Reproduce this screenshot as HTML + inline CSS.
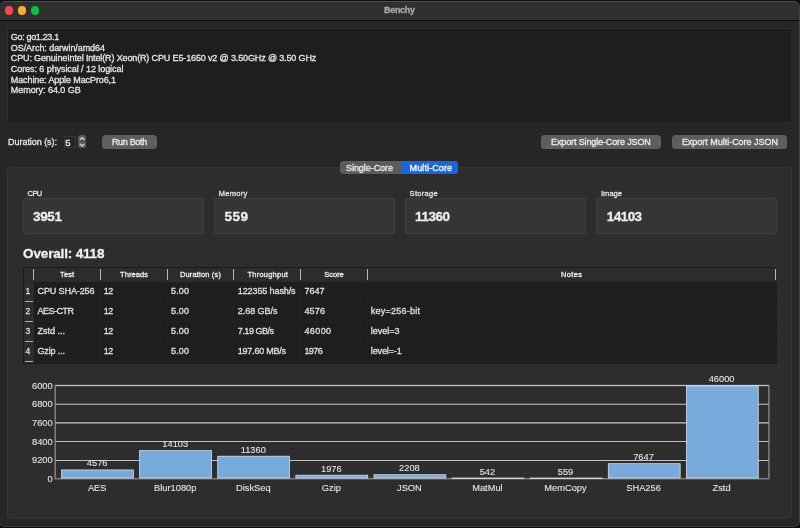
<!DOCTYPE html>
<html>
<head>
<meta charset="utf-8">
<title>Benchy</title>
<style>
*{box-sizing:border-box;margin:0;padding:0}
html,body{width:800px;height:528px;overflow:hidden;background:#0d0e10}
body{font-family:"Liberation Sans", sans-serif;position:relative}
.b{position:absolute}
.t{position:absolute;white-space:pre;-webkit-text-stroke:0.3px currentColor}
.n{-webkit-text-stroke:0.1px currentColor}
#txt{position:absolute;left:0;top:0;width:800px;height:528px;will-change:transform}
#win{position:absolute;left:-1px;top:1px;width:801px;height:525.7px;background:#262626;border-radius:6px;overflow:hidden;border:1px solid #3d3d3d;border-top-color:#4d4d4d;border-right-color:#424242}
#tbar{position:absolute;left:0;top:0;width:100%;height:19px;background:#2f2f2e;border-bottom:1px solid #0c0c0c}
</style>
</head>
<body>
<div id="win"><div id="tbar"></div></div>
<div class="b" style="left:4.6px;top:6.45px;width:8.3px;height:8.3px;background:#fc444b;border-radius:50%"></div>
<div class="b" style="left:17.85px;top:6.45px;width:8.3px;height:8.3px;background:#fcab30;border-radius:50%"></div>
<div class="b" style="left:31.1px;top:6.45px;width:8.3px;height:8.3px;background:#07c045;border-radius:50%"></div>
<div class="b" style="left:7px;top:28px;width:785.3px;height:94.5px;background:#1e1e1e;border:1px solid #282828;border-top-color:#303030;border-left-color:#2f2f2f"></div>
<div class="b" style="left:64px;top:136px;width:11.9px;height:11.8px;background:#262626;border:1px solid #373737"></div>
<svg class="b" style="left:77.7px;top:134.75px" width="8.4" height="13.3" viewBox="0 0 8.4 13.3">
  <rect x="0" y="0" width="8.4" height="13.3" rx="3.2" fill="#5b5b5b"/>
  <rect x="0" y="5.6" width="8.4" height="2" fill="#525252"/>
  <path d="M2.2 4.5 L4.15 2.55 L6.1 4.5" fill="none" stroke="#e4e4e4" stroke-width="1.1" stroke-linecap="round" stroke-linejoin="round"/>
  <path d="M2.2 9.2 L4.15 11.15 L6.1 9.2" fill="none" stroke="#e4e4e4" stroke-width="1.1" stroke-linecap="round" stroke-linejoin="round"/>
</svg>
<div class="b" style="left:102px;top:135.3px;width:55.2px;height:13.3px;background:#5e5e5e;border-radius:3.5px"></div>
<div class="b" style="left:541.1px;top:135.3px;width:119.9px;height:13.3px;background:#5e5e5e;border-radius:3.5px"></div>
<div class="b" style="left:671.7px;top:135.3px;width:115.5px;height:13.3px;background:#5e5e5e;border-radius:3.5px"></div>
<div class="b" style="left:7px;top:167px;width:785px;height:352px;background:#2d2d2d;border:1px solid #353535;border-radius:3px"></div>
<div class="b" style="left:339.6px;top:161px;width:62.4px;height:13px;background:#5b5b5b;border-radius:3.5px 0 0 3.5px"></div>
<div class="b" style="left:401.8px;top:161px;width:56.4px;height:13px;background:#1a66e0;border-radius:0 3.5px 3.5px 0"></div>
<div class="b" style="left:22.6px;top:198.4px;width:181.1px;height:35.7px;background:#353535;border:1px solid #404040;border-radius:2px"></div>
<div class="b" style="left:213.6px;top:198.4px;width:181.1px;height:35.7px;background:#353535;border:1px solid #404040;border-radius:2px"></div>
<div class="b" style="left:404.6px;top:198.4px;width:181.1px;height:35.7px;background:#353535;border:1px solid #404040;border-radius:2px"></div>
<div class="b" style="left:595.6px;top:198.4px;width:181.1px;height:35.7px;background:#353535;border:1px solid #404040;border-radius:2px"></div>
<div class="b" style="left:22.5px;top:267px;width:754.2px;height:96.6px;background:#1e1e1e;border-top:1px solid #1a1a1a;border-left:1px solid #1a1a1a"></div>
<div class="b" style="left:23.5px;top:268px;width:753.2px;height:13.8px;background:#2c2c2c;"></div>
<div class="b" style="left:23.5px;top:268px;width:10.2px;height:94.6px;background:#2c2c2c;"></div>
<div class="b" style="left:33.0px;top:269px;width:0.9px;height:11.4px;background:#b4b4b4;"></div>
<div class="b" style="left:100.1px;top:269px;width:0.9px;height:11.4px;background:#b4b4b4;"></div>
<div class="b" style="left:100.1px;top:281.8px;width:0.9px;height:80.8px;background:#222222;"></div>
<div class="b" style="left:166.6px;top:269px;width:0.9px;height:11.4px;background:#b4b4b4;"></div>
<div class="b" style="left:166.6px;top:281.8px;width:0.9px;height:80.8px;background:#222222;"></div>
<div class="b" style="left:233.3px;top:269px;width:0.9px;height:11.4px;background:#b4b4b4;"></div>
<div class="b" style="left:233.3px;top:281.8px;width:0.9px;height:80.8px;background:#222222;"></div>
<div class="b" style="left:300.1px;top:269px;width:0.9px;height:11.4px;background:#b4b4b4;"></div>
<div class="b" style="left:300.1px;top:281.8px;width:0.9px;height:80.8px;background:#222222;"></div>
<div class="b" style="left:367.2px;top:269px;width:0.9px;height:11.4px;background:#b4b4b4;"></div>
<div class="b" style="left:367.2px;top:281.8px;width:0.9px;height:80.8px;background:#222222;"></div>
<div class="b" style="left:774.8px;top:269px;width:0.9px;height:11.4px;background:#b4b4b4;"></div>
<div class="b" style="left:33.8px;top:301.2px;width:742.9px;height:0.8px;background:#232323;"></div>
<div class="b" style="left:24.6px;top:301.2px;width:8.6px;height:0.9px;background:#b0b0b0;"></div>
<div class="b" style="left:33.8px;top:321.2px;width:742.9px;height:0.8px;background:#232323;"></div>
<div class="b" style="left:24.6px;top:321.2px;width:8.6px;height:0.9px;background:#b0b0b0;"></div>
<div class="b" style="left:33.8px;top:341.2px;width:742.9px;height:0.8px;background:#232323;"></div>
<div class="b" style="left:24.6px;top:341.2px;width:8.6px;height:0.9px;background:#b0b0b0;"></div>
<div class="b" style="left:33.8px;top:361.2px;width:742.9px;height:0.8px;background:#232323;"></div>
<div class="b" style="left:24.6px;top:361.2px;width:8.6px;height:0.9px;background:#b0b0b0;"></div>
<svg class="b" style="left:0;top:370px" width="800" height="130" viewBox="0 370 800 130">
<rect x="55.2" y="385.50" width="713.70" height="93.20" fill="none" stroke="#7c7c7c" stroke-width="1.6"/>
<g stroke="#c8c8c8">
<line x1="55.6" y1="385.50" x2="768.6" y2="385.50" stroke-width="0.9"/>
<line x1="55.6" y1="404.30" x2="768.6" y2="404.30" stroke-width="1.1"/>
<line x1="55.6" y1="422.80" x2="768.6" y2="422.80" stroke-width="1.15"/>
<line x1="55.6" y1="441.50" x2="768.6" y2="441.50" stroke-width="0.95"/>
<line x1="55.6" y1="460.50" x2="768.6" y2="460.50" stroke-width="0.95"/>
</g>
<g fill="#78aadc" stroke="#e6ecf3" stroke-width="0.7">
<rect x="61.55" y="469.93" width="71.90" height="8.12"/>
<rect x="139.65" y="450.63" width="71.90" height="27.42"/>
<rect x="217.75" y="456.18" width="71.90" height="21.87"/>
<rect x="295.85" y="475.20" width="71.90" height="2.85"/>
<rect x="373.95" y="474.73" width="71.90" height="3.32"/>
<rect x="451.75" y="477.65" width="72.50" height="1.15" fill="#e6e6e6" stroke="none"/>
<rect x="529.85" y="477.65" width="72.50" height="1.15" fill="#e6e6e6" stroke="none"/>
<rect x="608.25" y="463.71" width="71.90" height="14.34"/>
<rect x="686.35" y="386.00" width="71.90" height="92.05"/>
</g></svg>
<div id="txt">
<div class="t" style="left:384.00px;top:5.00px;font-size:9px;line-height:10px;color:#a8a8a8;font-weight:bold;letter-spacing:-0.303px">Benchy</div>
<div class="t" style="left:10.80px;top:32.00px;font-size:9px;line-height:10px;color:#e6e6e6;letter-spacing:-0.332px">Go: go1.23.1</div>
<div class="t" style="left:10.80px;top:43.00px;font-size:9px;line-height:10px;color:#e6e6e6;letter-spacing:-0.067px">OS/Arch: darwin/amd64</div>
<div class="t" style="left:10.80px;top:53.00px;font-size:9px;line-height:10px;color:#e6e6e6;letter-spacing:-0.136px">CPU: GenuineIntel Intel(R) Xeon(R) CPU E5-1650 v2 @ 3.50GHz @ 3.50 GHz</div>
<div class="t" style="left:10.80px;top:64.00px;font-size:9px;line-height:10px;color:#e6e6e6;letter-spacing:-0.068px">Cores: 6 physical / 12 logical</div>
<div class="t" style="left:10.80px;top:75.00px;font-size:9px;line-height:10px;color:#e6e6e6;letter-spacing:-0.103px">Machine: Apple MacPro6,1</div>
<div class="t" style="left:10.80px;top:85.00px;font-size:9px;line-height:10px;color:#e6e6e6;letter-spacing:-0.045px">Memory: 64.0 GB</div>
<div class="t" style="left:8.10px;top:137.00px;font-size:9px;line-height:10px;color:#e6e6e6;letter-spacing:-0.051px">Duration (s):</div>
<div class="t" style="left:65.20px;top:137.00px;font-size:9.5px;line-height:11px;color:#e6e6e6">5</div>
<div class="t" style="left:111.95px;top:137.00px;font-size:9px;line-height:10px;color:#ececec;letter-spacing:-0.319px">Run Both</div>
<div class="t" style="left:551.00px;top:137.00px;font-size:9px;line-height:10px;color:#ececec;letter-spacing:-0.125px">Export Single-Core JSON</div>
<div class="t" style="left:681.90px;top:137.00px;font-size:9px;line-height:10px;color:#ececec;letter-spacing:-0.021px">Export Multi-Core JSON</div>
<div class="t" style="left:346.00px;top:163.00px;font-size:9px;line-height:10px;color:#ececec;letter-spacing:-0.053px">Single-Core</div>
<div class="t" style="left:409.60px;top:163.00px;font-size:9px;line-height:10px;color:#ffffff;letter-spacing:0.098px">Multi-Core</div>
<div class="t" style="left:27.60px;top:189.00px;font-size:7.5px;line-height:9px;color:#e0e0e0;letter-spacing:-0.572px">CPU</div>
<div class="t" style="left:218.80px;top:189.00px;font-size:7.5px;line-height:9px;color:#e0e0e0;letter-spacing:0.281px">Memory</div>
<div class="t" style="left:409.60px;top:189.00px;font-size:7.5px;line-height:9px;color:#e0e0e0;letter-spacing:0.286px">Storage</div>
<div class="t" style="left:601.00px;top:189.00px;font-size:7.5px;line-height:9px;color:#e0e0e0;letter-spacing:0.035px">Image</div>
<div class="t" style="left:33.10px;top:209.00px;font-size:13.5px;line-height:15px;color:#efefef;font-weight:bold;letter-spacing:-0.382px">3951</div>
<div class="t" style="left:224.50px;top:209.00px;font-size:13.5px;line-height:15px;color:#efefef;font-weight:bold;letter-spacing:0.434px">559</div>
<div class="t" style="left:415.10px;top:209.00px;font-size:13.5px;line-height:15px;color:#efefef;font-weight:bold;letter-spacing:-0.449px">11360</div>
<div class="t" style="left:606.80px;top:209.00px;font-size:13.5px;line-height:15px;color:#efefef;font-weight:bold;letter-spacing:-0.562px">14103</div>
<div class="t" style="left:23.10px;top:246.00px;font-size:13.5px;line-height:15px;color:#f0f0f0;font-weight:bold;letter-spacing:-0.161px">Overall: 4118</div>
<div class="t" style="left:59.97px;top:270.00px;font-size:7.5px;line-height:9px;color:#ececec;letter-spacing:0.161px">Test</div>
<div class="t" style="left:120.00px;top:270.00px;font-size:7.5px;line-height:9px;color:#ececec;letter-spacing:0.081px">Threads</div>
<div class="t" style="left:179.90px;top:270.00px;font-size:7.5px;line-height:9px;color:#ececec;letter-spacing:0.165px">Duration (s)</div>
<div class="t" style="left:247.50px;top:270.00px;font-size:7.5px;line-height:9px;color:#ececec;letter-spacing:0.225px">Throughput</div>
<div class="t" style="left:324.25px;top:270.00px;font-size:7.5px;line-height:9px;color:#ececec;letter-spacing:-0.023px">Score</div>
<div class="t" style="left:561.00px;top:270.00px;font-size:7.5px;line-height:9px;color:#ececec;letter-spacing:0.352px">Notes</div>
<div class="t" style="left:25.43px;top:286.00px;font-size:8.5px;line-height:10px;color:#dcdcdc">1</div>
<div class="t" style="left:37.50px;top:286.00px;font-size:9px;line-height:10px;color:#e0e0e0;letter-spacing:-0.103px">CPU SHA-256</div>
<div class="t" style="left:103.75px;top:286.00px;font-size:9px;line-height:10px;color:#e0e0e0;letter-spacing:-0.516px">12</div>
<div class="t" style="left:171.10px;top:286.00px;font-size:9px;line-height:10px;color:#e0e0e0;letter-spacing:0.123px">5.00</div>
<div class="t" style="left:237.80px;top:286.00px;font-size:9px;line-height:10px;color:#e0e0e0;letter-spacing:-0.105px">122355 hash/s</div>
<div class="t" style="left:304.40px;top:286.00px;font-size:9px;line-height:10px;color:#e0e0e0;letter-spacing:0.023px">7647</div>
<div class="t" style="left:25.43px;top:306.00px;font-size:8.5px;line-height:10px;color:#dcdcdc">2</div>
<div class="t" style="left:37.50px;top:306.00px;font-size:9px;line-height:10px;color:#e0e0e0;letter-spacing:-0.503px">AES-CTR</div>
<div class="t" style="left:103.75px;top:306.00px;font-size:9px;line-height:10px;color:#e0e0e0;letter-spacing:-0.516px">12</div>
<div class="t" style="left:171.10px;top:306.00px;font-size:9px;line-height:10px;color:#e0e0e0;letter-spacing:0.123px">5.00</div>
<div class="t" style="left:237.80px;top:306.00px;font-size:9px;line-height:10px;color:#e0e0e0;letter-spacing:-0.054px">2.68 GB/s</div>
<div class="t" style="left:304.40px;top:306.00px;font-size:9px;line-height:10px;color:#e0e0e0;letter-spacing:0.190px">4576</div>
<div class="t" style="left:370.75px;top:306.00px;font-size:9px;line-height:10px;color:#e0e0e0;letter-spacing:0.247px">key=256-bit</div>
<div class="t" style="left:25.43px;top:326.00px;font-size:8.5px;line-height:10px;color:#dcdcdc">3</div>
<div class="t" style="left:37.50px;top:326.00px;font-size:9px;line-height:10px;color:#e0e0e0">Zstd ...</div>
<div class="t" style="left:103.75px;top:326.00px;font-size:9px;line-height:10px;color:#e0e0e0;letter-spacing:-0.516px">12</div>
<div class="t" style="left:171.10px;top:326.00px;font-size:9px;line-height:10px;color:#e0e0e0;letter-spacing:0.123px">5.00</div>
<div class="t" style="left:237.80px;top:326.00px;font-size:9px;line-height:10px;color:#e0e0e0;letter-spacing:-0.466px">7.19 GB/s</div>
<div class="t" style="left:304.40px;top:326.00px;font-size:9px;line-height:10px;color:#e0e0e0;letter-spacing:0.417px">46000</div>
<div class="t" style="left:370.75px;top:326.00px;font-size:9px;line-height:10px;color:#e0e0e0;letter-spacing:-0.005px">level=3</div>
<div class="t" style="left:25.43px;top:346.00px;font-size:8.5px;line-height:10px;color:#dcdcdc">4</div>
<div class="t" style="left:37.50px;top:346.00px;font-size:9px;line-height:10px;color:#e0e0e0;letter-spacing:-0.145px">Gzip ...</div>
<div class="t" style="left:103.75px;top:346.00px;font-size:9px;line-height:10px;color:#e0e0e0;letter-spacing:-0.516px">12</div>
<div class="t" style="left:171.10px;top:346.00px;font-size:9px;line-height:10px;color:#e0e0e0;letter-spacing:0.123px">5.00</div>
<div class="t" style="left:237.80px;top:346.00px;font-size:9px;line-height:10px;color:#e0e0e0;letter-spacing:-0.233px">197.60 MB/s</div>
<div class="t" style="left:304.40px;top:346.00px;font-size:9px;line-height:10px;color:#e0e0e0;letter-spacing:-0.544px">1976</div>
<div class="t" style="left:370.75px;top:346.00px;font-size:9px;line-height:10px;color:#e0e0e0;letter-spacing:-0.112px">level=-1</div>
<div class="t n" style="left:32.01px;top:381.00px;font-size:9.3px;line-height:10px;color:#e6e6e6">6000</div>
<div class="t n" style="left:32.01px;top:399.00px;font-size:9.3px;line-height:10px;color:#e6e6e6">6800</div>
<div class="t n" style="left:32.01px;top:418.00px;font-size:9.3px;line-height:10px;color:#e6e6e6">7600</div>
<div class="t n" style="left:32.01px;top:437.00px;font-size:9.3px;line-height:10px;color:#e6e6e6">8400</div>
<div class="t n" style="left:32.01px;top:455.00px;font-size:9.3px;line-height:10px;color:#e6e6e6">9200</div>
<div class="t n" style="left:47.53px;top:474.00px;font-size:9.3px;line-height:10px;color:#e6e6e6">0</div>
<div class="t n" style="left:86.86px;top:458.00px;font-size:9.3px;line-height:10px;color:#e6e6e6">4576</div>
<div class="t n" style="left:87.90px;top:483.00px;font-size:9.3px;line-height:10px;color:#e6e6e6">AES</div>
<div class="t n" style="left:162.32px;top:439.00px;font-size:9.3px;line-height:10px;color:#e6e6e6">14103</div>
<div class="t n" style="left:154.05px;top:483.00px;font-size:9.3px;line-height:10px;color:#e6e6e6">Blur1080p</div>
<div class="t n" style="left:240.71px;top:445.00px;font-size:9.3px;line-height:10px;color:#e6e6e6">11360</div>
<div class="t n" style="left:235.99px;top:483.00px;font-size:9.3px;line-height:10px;color:#e6e6e6">DiskSeq</div>
<div class="t n" style="left:321.01px;top:464.00px;font-size:9.3px;line-height:10px;color:#e6e6e6">1976</div>
<div class="t n" style="left:321.79px;top:483.00px;font-size:9.3px;line-height:10px;color:#e6e6e6">Gzip</div>
<div class="t n" style="left:399.06px;top:463.00px;font-size:9.3px;line-height:10px;color:#e6e6e6">2208</div>
<div class="t n" style="left:397.00px;top:483.00px;font-size:9.3px;line-height:10px;color:#e6e6e6">JSON</div>
<div class="t n" style="left:479.69px;top:467.00px;font-size:9.3px;line-height:10px;color:#e6e6e6">542</div>
<div class="t n" style="left:472.21px;top:483.00px;font-size:9.3px;line-height:10px;color:#e6e6e6">MatMul</div>
<div class="t n" style="left:557.74px;top:467.00px;font-size:9.3px;line-height:10px;color:#e6e6e6">559</div>
<div class="t n" style="left:544.31px;top:483.00px;font-size:9.3px;line-height:10px;color:#e6e6e6">MemCopy</div>
<div class="t n" style="left:633.21px;top:452.00px;font-size:9.3px;line-height:10px;color:#e6e6e6">7647</div>
<div class="t n" style="left:626.23px;top:483.00px;font-size:9.3px;line-height:10px;color:#e6e6e6">SHA256</div>
<div class="t n" style="left:708.67px;top:374.00px;font-size:9.3px;line-height:10px;color:#e6e6e6">46000</div>
<div class="t n" style="left:712.55px;top:483.00px;font-size:9.3px;line-height:10px;color:#e6e6e6">Zstd</div>
</div>
</body>
</html>
